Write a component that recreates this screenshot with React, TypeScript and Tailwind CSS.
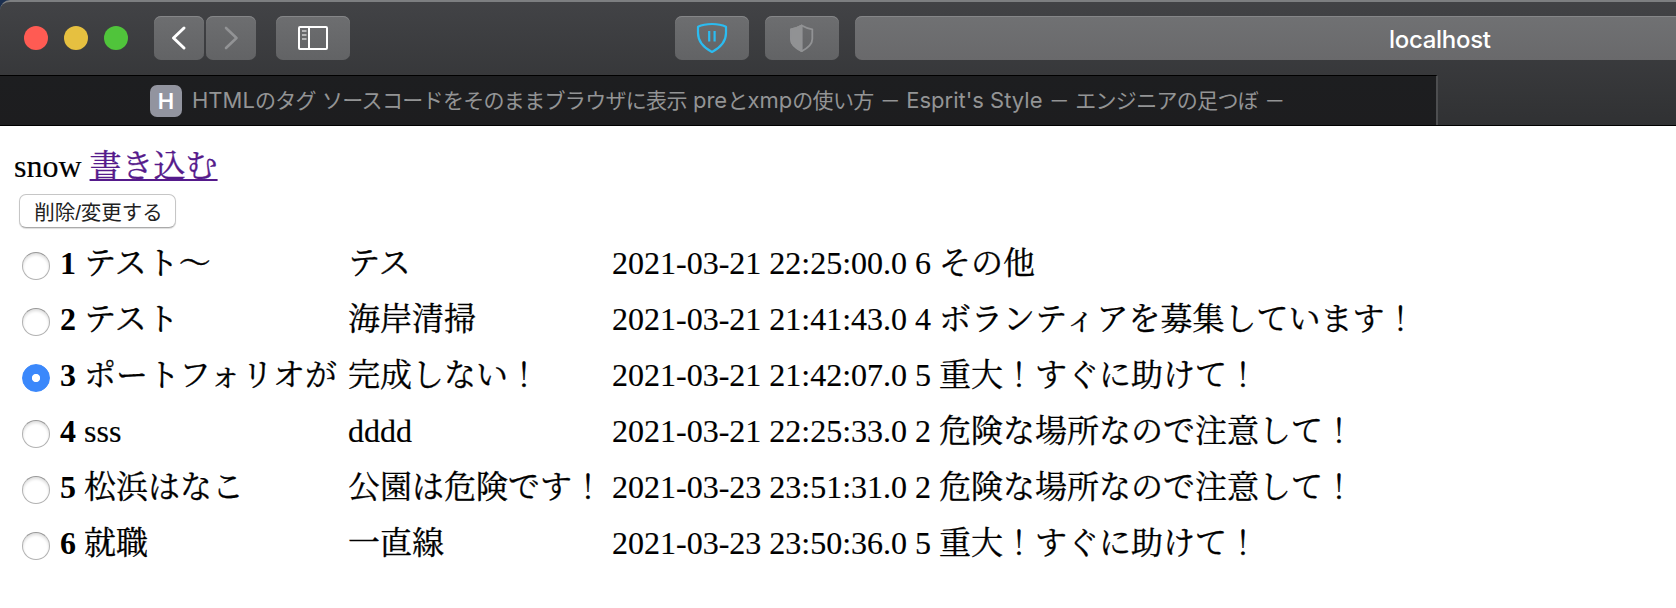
import React from "react";

type Post = { id: number; name: string; title: string; date: string; kind: number; label: string };

const posts: Post[] = [
  { id: 1, name: "テスト〜", title: "テス", date: "2021-03-21 22:25:00.0", kind: 6, label: "その他" },
  { id: 2, name: "テスト", title: "海岸清掃", date: "2021-03-21 21:41:43.0", kind: 4, label: "ボランティアを募集しています！" },
  { id: 3, name: "ポートフォリオが", title: "完成しない！", date: "2021-03-21 21:42:07.0", kind: 5, label: "重大！すぐに助けて！" },
  { id: 4, name: "sss", title: "dddd", date: "2021-03-21 22:25:33.0", kind: 2, label: "危険な場所なので注意して！" },
  { id: 5, name: "松浜はなこ", title: "公園は危険です！", date: "2021-03-23 23:51:31.0", kind: 2, label: "危険な場所なので注意して！" },
  { id: 6, name: "就職", title: "一直線", date: "2021-03-23 23:50:36.0", kind: 5, label: "重大！すぐに助けて！" },
];

const latinStroke = "[-webkit-text-stroke:0.15px_black]";
const kanjiStroke = "[-webkit-text-stroke:0.35px_black]";
const strokeFor = (text: string) => (/^[\x20-\x7e]*$/.test(text) ? latinStroke : kanjiStroke);

const toolButton =
  "flex h-11 shrink-0 items-center justify-center rounded-[7px] bg-linear-to-b from-[#6d6e70] to-[#626365] shadow-[inset_0_1px_0_#858688]";

function Toolbar() {
  return (
    <div className="flex h-[59px] items-start pl-6">
      <div className="flex h-11 w-[130px] shrink-0 items-center gap-4">
        <span className="size-6 rounded-full bg-[#ff5b53]" />
        <span className="size-6 rounded-full bg-[#e6c040]" />
        <span className="size-6 rounded-full bg-[#50c43b]" />
      </div>
      <button className={`${toolButton} w-[50px]`}>
        <svg width="50" height="44" fill="none" stroke="#fff" strokeWidth="3" strokeLinecap="round" strokeLinejoin="round">
          <path d="M30 12 19.500 22 30 32" />
        </svg>
      </button>
      <button className={`${toolButton} ml-0.5 w-[50px]`}>
        <svg width="50" height="44" fill="none" stroke="#929395" strokeWidth="2.600" strokeLinecap="round" strokeLinejoin="round">
          <path d="M20 12 30.500 22 20 32" />
        </svg>
      </button>
      <button className={`${toolButton} ml-5 w-[74px]`}>
        <svg width="30" height="24" fill="none" stroke="#fff" strokeWidth="2">
          <rect x="1" y="1" width="28" height="22" rx="1" />
          <path d="M11 1v22" />
          <path d="M4 5h4.500M4 9h4.500M4 13h4.500" stroke="#d0d0d1" strokeWidth="1.700" />
        </svg>
      </button>
      <button className={`${toolButton} ml-[325px] w-[74px]`}>
        <svg width="74" height="44" fill="none" stroke="#2bbcf1" strokeWidth="2.200" strokeLinejoin="round">
          <path d="M37 8c5.500 0 10 .8 14 2.700V17c0 9-5.500 14.500-14 19-8.500-4.500-14-10-14-19v-6.300C27 8.800 31.500 8 37 8Z" />
          <path d="M34.200 15v10.500M39.600 15v10.500" />
        </svg>
      </button>
      <button className={`${toolButton} ml-4 w-[74px]`}>
        <svg width="74" height="44" fill="none" stroke="#919294" strokeWidth="1.800" strokeLinejoin="round">
          <path d="M36.700 9.500c3.300 2 6.500 3 10.600 3.800V23c0 5-4.500 9-10.600 12.200C30.500 32 26 28 26 23v-9.700c4.100-.8 7.400-1.800 10.700-3.800Z" />
          <path d="M36.700 9.500v25.700C30.500 32 26 28 26 23v-9.700c4.100-.8 7.400-1.800 10.700-3.800Z" fill="#919294" />
        </svg>
      </button>
      <div className="ml-4 h-11 grow overflow-hidden rounded-l-[7px] bg-linear-to-b from-[#707173] to-[#69696b] pl-[534px] text-[24px] leading-[47px] font-medium tracking-[-0.3px] text-white shadow-[inset_0_1px_0_#858688]">
        localhost
      </div>
    </div>
  );
}

function Ja({ children }: { children: React.ReactNode }) {
  return <span className="text-[21px] tracking-[-0.680px]">{children}</span>;
}

function TabBar() {
  return (
    <div className="flex h-[50px]">
      <div className="flex w-[1438px] items-center border-t border-t-black border-r-2 border-r-[#4d4e50] bg-linear-to-b from-[#1d1e20] to-[#1d1d1f] pl-[150px]">
        <span className="flex size-8 shrink-0 items-center justify-center rounded-[7px] bg-[#92949f] text-[22px] leading-none font-semibold text-white">
          H
        </span>
        <span className="ml-2.5 text-[22px] leading-[30px] whitespace-nowrap text-[#939495]">
          HTML<Ja>のタグ</Ja> <Ja>ソースコードをそのままブラウザに表示</Ja> pre<Ja>と</Ja>xmp<Ja>の使い方</Ja> <Ja>－</Ja> Esprit's
          Style <Ja>－</Ja> <Ja>エンジニアの足つぼ</Ja> <Ja>－</Ja>
        </span>
      </div>
    </div>
  );
}

function Row({ post, checked, onSelect }: { post: Post; checked: boolean; onSelect: () => void }) {
  return (
    <label className="grid h-14 grid-cols-[38px_24px_264px_264px_303px_24px_auto] items-center whitespace-nowrap">
      <input
        type="radio"
        name="post"
        checked={checked}
        onChange={onSelect}
        className="mt-1.5 size-7 appearance-none rounded-full border border-[#b2b2b2] border-t-[#989898] bg-white shadow-[inset_0_2px_3px_#dedede] checked:border-[#3b88fb] checked:bg-[radial-gradient(circle,#fff_0_3.700px,#3b88fb_4.500px)] checked:shadow-none"
      />
      <b>{post.id}</b>
      <span className={strokeFor(post.name)}>{post.name}</span>
      <span className={strokeFor(post.title)}>{post.title}</span>
      <span className={latinStroke}>{post.date}</span>
      <span className={latinStroke}>{post.kind}</span>
      <span className={kanjiStroke}>{post.label}</span>
    </label>
  );
}

export default function App() {
  const [selected, setSelected] = React.useState(3);
  return (
    <div className="h-[608px] w-[1676px] overflow-hidden bg-white">
      <header className="h-[126px] overflow-hidden bg-[#1b2f4f] font-[Inter,'Noto_Sans_CJK_JP',sans-serif]">
        <div className="h-full rounded-tl-[10px] border-t-2 border-b border-t-[#7d7f81] border-b-black bg-linear-to-b from-[#424346] to-[#303133] pt-[14px]">
          <Toolbar />
          <TabBar />
        </div>
      </header>
      <main className="font-['Liberation_Serif','Noto_Serif_CJK_JP','Noto_Sans_CJK_JP',serif] text-[32px] leading-[48px] text-black">
        <p className="h-[68px] pt-4 pl-[14px]">
          <span className={latinStroke}>snow</span>{" "}
          <a href="#" className="text-[#551a8b] underline decoration-2 underline-offset-[2px] [-webkit-text-stroke:0.35px_#551a8b]">
            書き込む
          </a>
        </p>
        <button className="ml-[19px] flex h-[34px] w-[157px] items-center justify-center rounded-[7px] border border-[#c6c6c6] border-b-[#aaa] bg-white pt-1 pl-0.5 font-['Liberation_Sans','Noto_Sans_CJK_JP',sans-serif] text-[20.500px] leading-none text-[#222] shadow-[0_1px_1px_#ddd]">
          削除/変更する
        </button>
        <form className="pt-[7px] pl-[22px]">
          {posts.map((post) => (
            <Row key={post.id} post={post} checked={selected === post.id} onSelect={() => setSelected(post.id)} />
          ))}
        </form>
      </main>
    </div>
  );
}
